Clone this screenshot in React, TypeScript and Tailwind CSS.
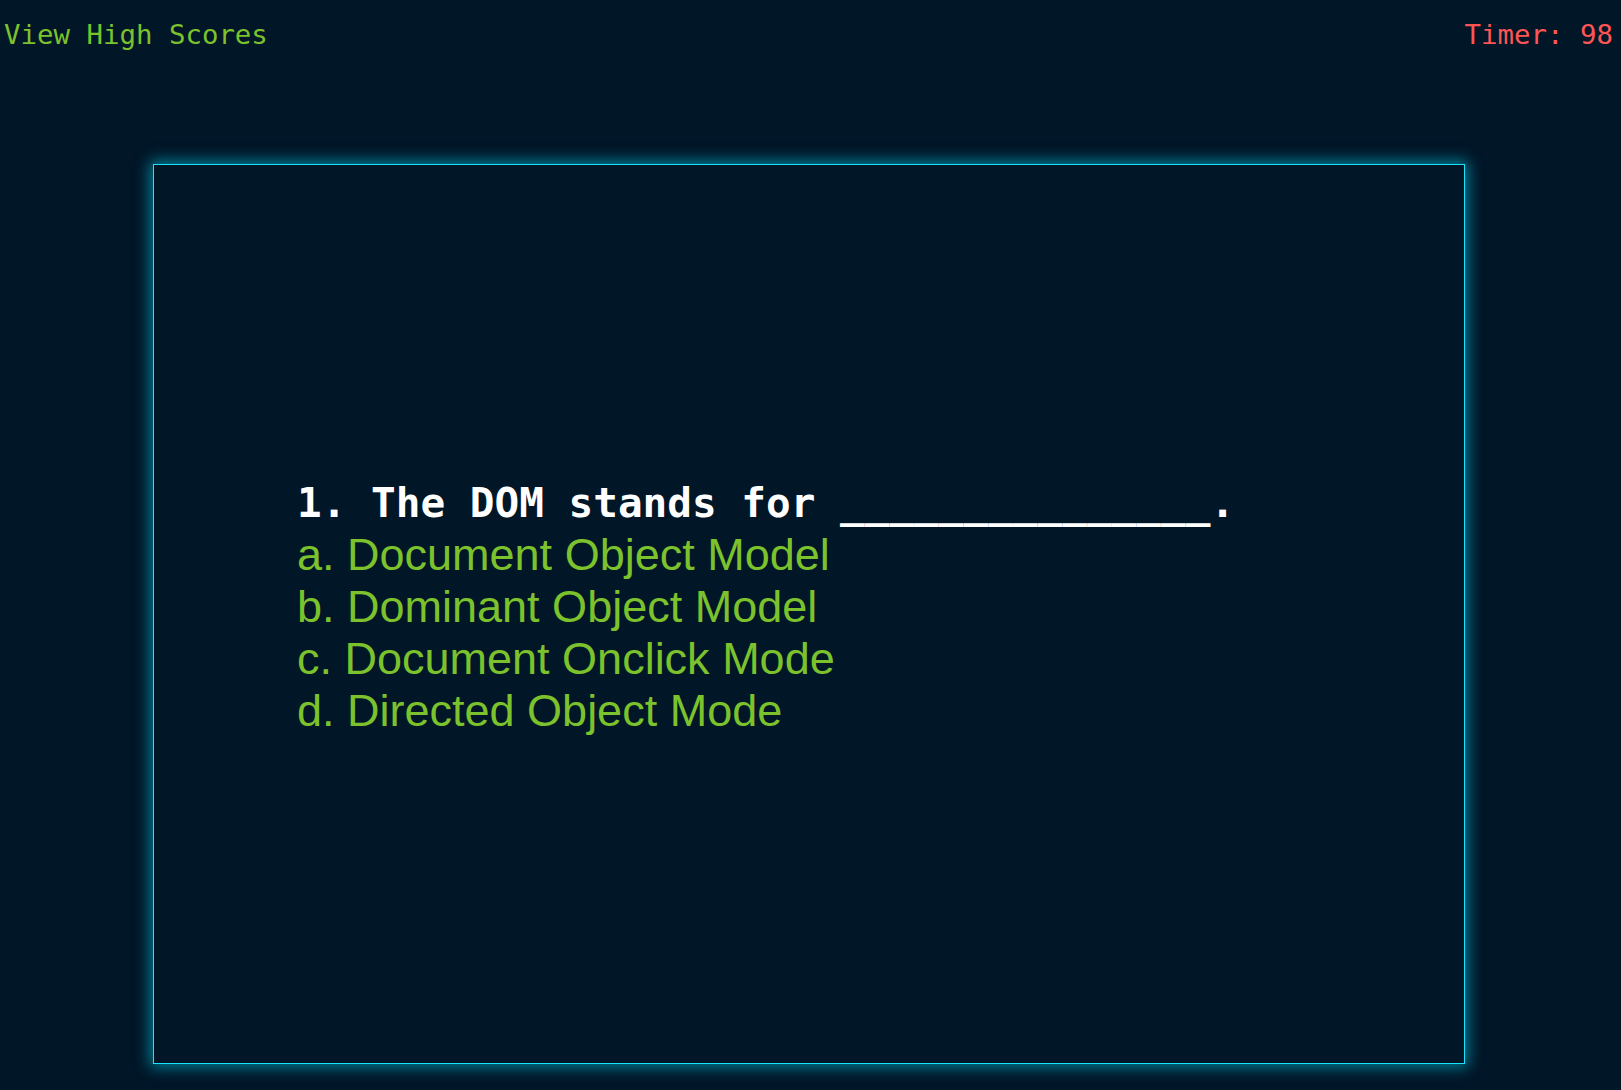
import React from "react";

export default function App() {
  const answers = [
    "a. Document Object Model",
    "b. Dominant Object Model",
    "c. Document Onclick Mode",
    "d. Directed Object Mode",
  ];
  return (
    <div className="min-h-[1090px] w-full bg-[#011627]">
      <header className="flex justify-between items-start pt-[18px] pl-[4px] pr-[8px] h-[52px] text-[27.4px] leading-[34px] [font-family:'DejaVu_Sans_Mono',monospace]">
        <a className="text-[#7cc22d] cursor-pointer">View High Scores</a>
        <span className="text-[#ff5555]">Timer: 98</span>
      </header>
      <div className="flex pl-[153px] mt-[112px]">
        <main className="w-[1312px] h-[900px] border border-[#19e3ff] shadow-[0_0_14px_3px_rgba(0,215,245,0.55)] pt-[312px] pl-[143px]">
          <h2 className="text-white font-bold text-[41px] leading-[52px] whitespace-pre [font-family:'DejaVu_Sans_Mono',monospace]">
            1. The DOM stands for _______________.
          </h2>
          <ul className="text-[#7cc22d] text-[45px] leading-[52px] [font-family:'Liberation_Sans',Arial,sans-serif]">
            {answers.map((a) => (
              <li key={a} className="cursor-pointer">
                {a}
              </li>
            ))}
          </ul>
        </main>
      </div>
    </div>
  );
}
